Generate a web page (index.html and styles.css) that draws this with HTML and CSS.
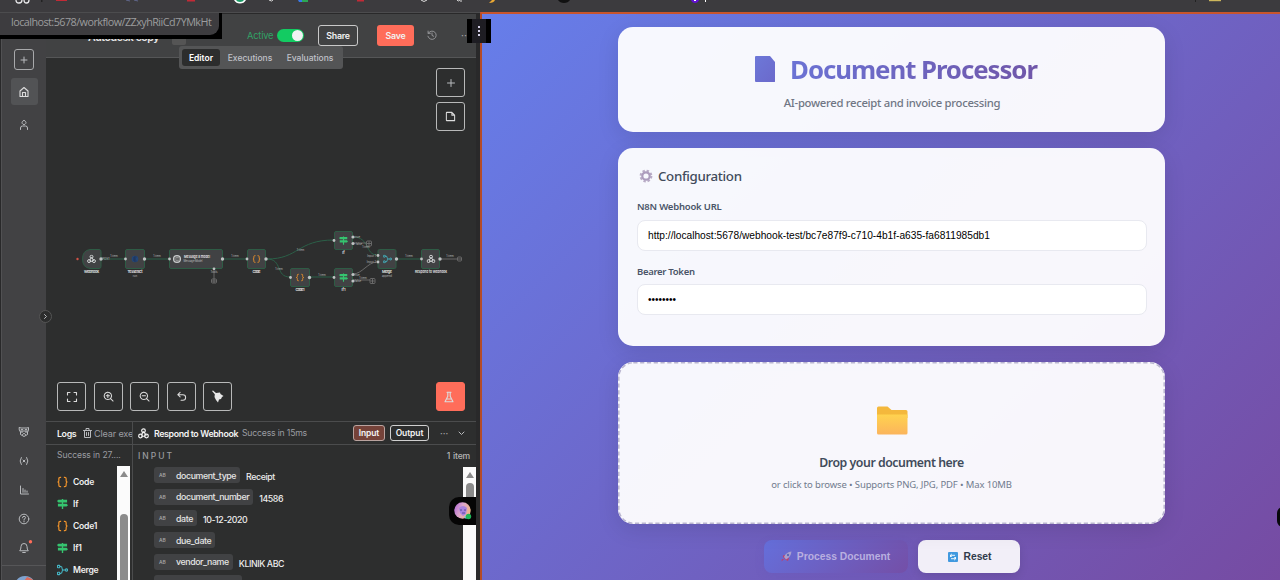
FILE: index.html
```html
<!DOCTYPE html>
<html lang="en">
<head>
<meta charset="utf-8">
<title>Document Processor</title>
<link rel="stylesheet" href="styles.css">
</head>
<body>
<svg class="defs" width="0" height="0">
  <defs>
    <symbol id="hook" viewBox="0 0 24 24"><g fill="none" stroke="currentColor" stroke-width="2.6"><circle cx="12" cy="6" r="4"/><circle cx="5.500" cy="17.500" r="4"/><circle cx="18.500" cy="17.500" r="4"/><path d="M12 7 7 16M13 8l5 9M7 18h9"/></g></symbol>
    <symbol id="sign" viewBox="0 0 24 24"><path fill="#35c46f" d="M10.500 1h3v1.500H22v6h-8.500v3H21l3 3-3 3h-7.500V23h-3v-5.500H2v-6h8.500v-3H3l-3-3 3-3h7.500z"/></symbol>
    <symbol id="braces" viewBox="0 0 24 24"><path fill="none" stroke="#f0932b" stroke-width="2.600" d="M9 2H7Q4 2 4 5v4q0 3-3 3 3 0 3 3v4q0 3 3 3h2M15 2h2q3 0 3 3v4q0 3 3 3-3 0-3 3v4q0 3-3 3h-2"/></symbol>
    <symbol id="merge" viewBox="0 0 24 24"><g fill="none" stroke="#45b5c4" stroke-width="2.400"><rect x="1" y="2" width="5" height="5" rx="1"/><rect x="1" y="17" width="5" height="5" rx="1"/><circle cx="20.500" cy="12" r="2.500"/><path d="M6 4.500h2q3 0 3 3.500t3 4h4M6 19.500h2q3 0 3-3.500t3-4"/></g></symbol>
  </defs>
</svg>

<div class="bookmarks">
  <svg width="1280" height="12" viewBox="0 0 1280 12">
    <g fill="none" stroke="#e8e8ea" stroke-width="1.300"><path d="M16 0q0 3 3 3t3-3M24 0q0 3 2.500 3t2.500-3"/></g>
    <path fill="#222" d="M41 0h1.500v2H41zM1195 0h1v2h-1z"/><path fill="#c22a36" d="M56 0h11v1H56zM187 0h8v1.500h-8zM357 0h7v1.500h-7z"/>
    <path stroke="#61678d" d="M126 0l4 1M134 0l4 1" fill="none"/>
    <path fill="#fff" d="M234 0h12q-2 3.500-6 3.500T234 0z"/><path fill="#1b9a65" d="M236 0h8q-1 2-4 2t-4-2z"/>
    <path stroke="#ddd" fill="none" d="M269 0q3 2 4 0M421 0q3 3 6 0M457 0q1 2 3 0M461 0v2"/>
    <path fill="#3978e8" d="M298 0h5v2h-4z"/><path fill="#2ca655" d="M302 0h6v2h-6z"/>
    <path fill="#eba833" d="M489 3q5 0 6-3h-3z"/><path fill="#cdb75c" d="M1209 0h12v1.200h-12z"/><path fill="#111" d="M558 0h12q-2 3-6 3t-6-3z"/>
    <path fill="#6210d2" d="M691 0h8q-1 3-4 3t-4-3z"/><path fill="#fff" d="M694 0h2v1h-2zM705 0h1v2h-1z"/>
  </svg>
</div>

<div class="split">
  <div class="left">
    <nav class="side">
      <div class="side-top">
        <span class="add"><svg width="10" height="10" viewBox="0 0 10 10"><path class="ln" d="M5 2v6M2 5h6"/></svg></span>
        <span class="home"><svg width="12" height="12" viewBox="0 0 12 12"><path class="ln b" d="M2 5 6 1.500 10 5v5.500H2zM4.500 10.500v-4h3v4"/></svg></span>
        <svg class="user" width="12" height="12" viewBox="0 0 12 12"><path class="ln" d="M2.500 10.500V9q0-2 2-2h3q2 0 2 2v1.500M6 1.500a2 2 0 1 0 .01 0z"/></svg>
      </div>
      <div class="side-low">
        <svg width="12" height="12" viewBox="0 0 12 12"><path class="ln" d="M1.500 1.500 3 2h6l1.500-.5v3L9.500 6v2.500L6 10.500 2.500 8.500V6l-1-1.500zM3 4v2h2V4zM7 4v2h2V4zM4.500 8.500 6 7.300l1.500 1.200"/></svg>
        <svg width="12" height="12" viewBox="0 0 12 12"><path class="ln" d="M3.300 2.500q-2.500 3.500 0 7M8.700 2.500q2.500 3.500 0 7M5 5l2 2M7 5 5 7"/></svg>
        <svg width="12" height="12" viewBox="0 0 12 12"><path class="ln" d="M2.500 2v8h8M5 4.500v3.800M7 6v2.300M9 7v1.300"/></svg>
        <svg width="12" height="12" viewBox="0 0 12 12"><circle class="ln" cx="6" cy="6" r="4.800"/><path class="ln" d="M4.500 4.800q0-1.500 1.500-1.500t1.500 1.300Q7.500 5.700 6 6.300v.5M6 8v.9"/></svg>
        <svg class="bell" width="18" height="14" viewBox="-3 -2 18 14"><path class="ln" d="M2 8.500q1-1 1-4 0-3 3-3t3 3q0 3 1 4zM4.700 10.500h2.600"/><circle cx="12.500" cy="-.2" r="1.700" fill="#ff6d5a"/></svg>
      </div>
      <div class="me"><svg width="18" height="5" viewBox="0 0 18 5"><path fill="#7fa3cf" d="M0 5Q3 0 9 0t9 5z"/><path fill="#d96b5c" d="M8 5l3-4q5 1 7 4z"/></svg></div>
    </nav>

    <div class="app">
      <header class="head">
        <span class="wfname">Autodesk copy</span><span class="tagbox">+1</span>
        <div class="acts"><span class="active">Active</span><span class="toggle"><i></i></span><span class="share">Share</span><span class="save">Save</span>
        <svg class="hist" width="10" height="10" viewBox="0 0 12 12"><path class="ln" d="M1.300 1.300V4H4M1.500 4a5 5 0 1 1-.4 3.500M6 3.500V6.500l2 1"/></svg><span class="dots">···</span></div>
      </header>
      <div class="tabs"><span class="tab on">Editor</span><span class="tab">Executions</span><span class="tab">Evaluations</span></div>

      <section class="canvas">
        <svg class="flow" width="430" height="363" viewBox="46 58 430 363">
          <g fill="none" stroke="#2b6048" stroke-width="1">
            <path d="M101 259h24M145 259h24M223 259h24M267 259c32 0 30-19 67-19M267 259c16 0 8 18 23 18M310 277h24M397 259h24M353 237c17 0 12 18 24 18"/>
          </g>
          <g fill="none" stroke="#777" stroke-width=".8"><path d="M353 243h13M353 280h17M353 274c9 0 15-12 24-12M440 259h17M214 269v10"/><rect x="366.500" y="241" width="5" height="5" rx="1"/><rect x="370" y="278.500" width="5" height="5" rx="1"/><rect x="457.500" y="257" width="4" height="4" rx="1"/><rect x="211.500" y="279" width="5" height="4" rx="1"/><path d="M367 243.500h4M369 241.500v4M370.500 281h4M372.500 279v4M458 259h3M212 281h4M214 279v4"/></g>
          <g fill="#414244" stroke="#2e5c45" stroke-width="1">
            <path d="M90 249.500h9q2 0 2 2v15q0 2-2 2h-9q-7.500-1-7.500-9.500T90 249.500z"/>
            <rect x="125.500" y="249.500" width="19" height="19" rx="1.500"/><rect x="169.500" y="249.500" width="53" height="19" rx="1.500"/><rect x="247.500" y="249.500" width="18" height="19" rx="1.500"/><rect x="334.500" y="231.500" width="18" height="18" rx="1.500"/><rect x="290.500" y="268.500" width="19" height="18" rx="1.500"/><rect x="334.500" y="268.500" width="18" height="18" rx="1.500"/><rect x="378" y="249.500" width="18" height="19" rx="1.500"/><rect x="421.500" y="249.500" width="18" height="19" rx="1.500"/>
          </g>
          <g fill="#bfc2c3"><circle cx="101" cy="259" r="1.700"/><circle cx="125.500" cy="259" r="1.400"/><circle cx="144.500" cy="259" r="1.700"/><circle cx="169.500" cy="259" r="1.400"/><circle cx="222.500" cy="259" r="1.700"/><circle cx="247" cy="259" r="1.400"/><circle cx="266" cy="259" r="1.700"/><circle cx="334" cy="240.500" r="1.400"/><circle cx="353" cy="237" r="1.600"/><circle cx="353" cy="243.500" r="1.600"/><circle cx="290.500" cy="277.500" r="1.400"/><circle cx="309.500" cy="277.500" r="1.700"/><circle cx="334" cy="277.500" r="1.400"/><circle cx="353" cy="274.500" r="1.600"/><circle cx="353" cy="281" r="1.600"/><circle cx="378" cy="255.500" r="1.400"/><circle cx="378" cy="262" r="1.400"/><circle cx="396.500" cy="259" r="1.700"/><circle cx="421.500" cy="259" r="1.400"/><circle cx="440" cy="259" r="1.700"/><circle cx="214" cy="268.800" r="1.400"/></g>
          <circle cx="77.500" cy="259" r="1.200" fill="#d15246"/>
          <g color="#d5d7d8"><use href="#hook" x="87" y="254.500" width="9" height="9"/><use href="#hook" x="426.500" y="254.500" width="9" height="9"/></g>
          <circle cx="135" cy="259" r="3.300" fill="#234778"/><path d="M136.500 257h-2.500v4h2.500M134 259h2" stroke="#1e3259" fill="none"/>
          <circle cx="177" cy="259" r="3.400" fill="none" stroke="#c9cbcc" stroke-width="1.300"/><path d="M175 258l4-1v4l-4-1zM177 256v6" fill="none" stroke="#aaa" stroke-width=".7"/>
          <use href="#braces" x="252.500" y="255" width="8" height="8"/><use href="#braces" x="296" y="273.500" width="8" height="8"/>
          <use href="#sign" x="339" y="236" width="9" height="9"/><use href="#sign" x="339" y="273" width="9" height="9"/><use href="#merge" x="383" y="254.500" width="9" height="9"/>
          <g class="nlab"><text x="91.500" y="273.300" textLength="15">Webhook</text><text x="135" y="273.300" textLength="15">Tesseract</text><text x="256.500" y="273.300" textLength="8">Code</text><text x="343.500" y="254">If</text><text x="300" y="291" textLength="9">Code1</text><text x="343.500" y="291">If1</text><text x="387" y="273.300" textLength="10">Merge</text><text x="431" y="273.300" textLength="32" lengthAdjust="spacingAndGlyphs">Respond to Webhook</text><text x="197" y="258" textLength="26" lengthAdjust="spacingAndGlyphs">Message a model</text></g>
          <g class="mini"><text x="193" y="262" textLength="19">Message Model</text><text x="135" y="277">run</text><text x="387" y="277">append</text><text x="106" y="260">POST</text><text x="114" y="257">1 item</text><text x="157" y="257">1 item</text><text x="235" y="257">1 item</text><text x="300.500" y="250.500">1 item</text><text x="279" y="269.500">1 item</text><text x="322" y="276">1 item</text><text x="409" y="257">1 item</text><text x="450" y="257">1 item</text><text x="357.500" y="238">true</text><text x="359" y="244.500">false</text><text x="366" y="248">1 item</text><text x="357" y="275.500">true</text><text x="358" y="282">false</text><text x="363" y="279">1 item</text><text x="371.500" y="256.500">Input 1</text><text x="371.500" y="263">Input 2</text><text x="214" y="273">Tools</text></g>
        </svg>
        <div class="tools-r">
          <span class="tool"><svg width="10" height="10" viewBox="0 0 10 10"><path class="ln" d="M5 1.500v7M1.500 5h7"/></svg></span>
          <span class="tool"><svg width="11" height="11" viewBox="0 0 12 12"><path class="ln b" d="M2 1.500h5.500l3 3v6H2q-.5 0-.5-.5V2q0-.5.500-.5zM7.500 1.500v3h3"/></svg></span>
        </div>
        <div class="tools-b">
          <span class="tool"><svg width="12" height="12" viewBox="0 0 12 12"><path class="ln b" d="M1.500 4V1.500H4M8 1.500h2.500V4M10.500 8v2.500H8M4 10.500H1.500V8"/></svg></span>
          <span class="tool"><svg width="11" height="11" viewBox="0 0 12 12"><path class="ln b" d="M5.300 1.300a4 4 0 1 0 .01 0M8.300 8.300 11 11M3.500 5.300h3.600M5.300 3.500v3.600"/></svg></span>
          <span class="tool"><svg width="11" height="11" viewBox="0 0 12 12"><path class="ln b" d="M5.300 1.300a4 4 0 1 0 .01 0M8.300 8.300 11 11M3.500 5.300h3.600"/></svg></span>
          <span class="tool"><svg width="11" height="11" viewBox="0 0 12 12"><path class="ln b" d="M4.500 1.500 2 4l2.500 2.500M2 4h5.500q3 0 3 3t-3 3H5.500"/></svg></span>
          <span class="tool"><svg width="13" height="13" viewBox="0 0 13 13"><path fill="#e8e8e8" d="M1 1l1-.5 3 2.500 4-.5.500 1.500 3 2-1.500 1-1 2-2 .5L7 12.500 5 10 3.500 7 3.800 4.300z"/></svg></span>
          <span class="tool test"><svg width="12" height="12" viewBox="0 0 12 12"><path class="ln b" d="M4 1.200h4M4.800 1.200v4L2 10.800h8L7.200 5.200v-4M3.500 8h5"/></svg></span>
        </div>
      </section>

      <section class="logs">
        <div class="log-l">
          <div class="bar"><b>Logs</b><svg width="9" height="10" viewBox="0 0 9 10"><path class="ln" d="M.5 2.500h8M3 2.500v-2h3v2M1.500 2.500v7h6v-7M3.500 4.500v3M5.500 4.500v3"/></svg><span class="mut clr">Clear execution</span></div>
          <div class="mut succ">Success in 27....</div>
          <ul class="runs">
            <li><svg width="11" height="12"><use href="#braces" width="11" height="12"/></svg>Code</li>
            <li><svg width="11" height="12"><use href="#sign" width="11" height="12"/></svg>If</li>
            <li><svg width="11" height="12"><use href="#braces" width="11" height="12"/></svg>Code1</li>
            <li><svg width="11" height="12"><use href="#sign" width="11" height="12"/></svg>If1</li>
            <li><svg width="11" height="12"><use href="#merge" width="11" height="12"/></svg>Merge</li>
          </ul>
          <div class="scroll s1"><i></i><b></b></div>
        </div>
        <div class="log-r">
          <div class="bar"><svg class="hk" width="11" height="11"><use href="#hook" width="11" height="11"/></svg><b class="rtw">Respond to Webhook</b><span class="mut s15">Success in 15ms</span>
            <span class="chip in">Input</span><span class="chip">Output</span><span class="dots2">···</span><svg class="chev" width="7" height="5" viewBox="0 0 7 5"><path class="ln" d="M1 1l2.500 2.500L6 1"/></svg></div>
          <div class="inrow"><span>INPUT</span><span class="items">1 item</span></div>
          <dl class="fields">
            <div><dt><i>AB</i>document_type</dt><dd>Receipt</dd></div>
            <div><dt><i>AB</i>document_number</dt><dd>14586</dd></div>
            <div><dt><i>AB</i>date</dt><dd>10-12-2020</dd></div>
            <div><dt><i>AB</i>due_date</dt><dd></dd></div>
            <div><dt><i>AB</i>vendor_name</dt><dd>KLINIK ABC</dd></div>
            <div><dt class="next"></dt></div>
          </dl>
          <div class="scroll s2"><i></i><b></b></div>
        </div>
      </section>
    </div>
    <div class="fold"><svg width="5" height="7" viewBox="0 0 5 7"><path class="ln" d="M1.500 1.500 3.500 3.500l-2 2"/></svg></div>
    <div class="avatar"><svg width="18" height="18" viewBox="0 0 18 18"><defs><linearGradient id="av" x2="1" y2=".4"><stop stop-color="#ad62d8"/><stop offset=".5" stop-color="#dba6cb"/><stop offset="1" stop-color="#efb58d"/></linearGradient></defs><circle cx="8.500" cy="8.500" r="8.200" fill="url(#av)"/><path fill="#a983e0" d="M5 6q4-4 8 0l-1 6-3 2-3-3z"/><path d="M6 8h2M10 8h2M8 11h3" stroke="#5b4a9a"/><path fill="#72c5dc" d="M10 15l4-3 1 2-3 3z"/><circle cx="14.500" cy="14.500" r="2.700" fill="#20b759"/></svg></div>
    <div class="status"><span>localhost:5678/workflow/ZZxyhRiiCd7YMkHt</span></div>
  </div>

  <main class="right">
    <section class="card hero">
      <h1><svg width="22" height="26" viewBox="0 0 22 26"><defs><linearGradient id="dg" x1="0" y1="0" x2="1" y2="1"><stop stop-color="#6d78d8"/><stop offset="1" stop-color="#6b69cb"/></linearGradient></defs><path fill="url(#dg)" d="M1 0h14l5 6v19.500q0 .5-1 .5H1q-1 0-1-1V1q0-1 1-1z"/></svg><span>Document Processor</span></h1>
      <p>AI-powered receipt and invoice processing</p>
    </section>
    <section class="card config">
      <h2><svg width="14" height="14" viewBox="0 0 14 14"><circle cx="7" cy="7" r="5.400" fill="none" stroke="#b9acc6" stroke-width="2" stroke-dasharray="2.400 1.840"/><circle cx="7" cy="7" r="3.700" fill="none" stroke="#ac9cbd" stroke-width="2.200"/></svg><span>Configuration</span></h2>
      <label>N8N Webhook URL</label>
      <div class="field"><span>http://localhost:5678/webhook-test/bc7e87f9-c710-4b1f-a635-fa6811985db1</span></div>
      <label class="l2">Bearer Token</label>
      <div class="field pw"><span>••••••••</span></div>
    </section>
    <section class="card drop">
      <svg class="dash" width="547" height="162"><rect x=".8" y=".8" width="545.400" height="160.400" rx="14.500" fill="none" stroke="#b9b5cf" stroke-width="1.500" stroke-dasharray="4.200 2.600"/></svg>
      <svg width="32" height="30" viewBox="0 0 32 30"><defs><linearGradient id="fg" x2="0" y2="1"><stop stop-color="#ffd34f"/><stop offset="1" stop-color="#fbb45c"/></linearGradient></defs><path fill="#f4b83c" d="M1 2q0-1.500 1.500-1.500h9L15.500 4H30q1.500 0 1.500 1.500V12H1z"/><path fill="url(#fg)" d="M1 8.500h30.500V27q0 1.500-1.500 1.500H2.500Q1 28.500 1 27z"/></svg>
      <h3>Drop your document here</h3>
      <p>or click to browse • Supports PNG, JPG, PDF • Max 10MB</p>
    </section>
    <div class="btns">
      <span class="btn proc"><svg width="11" height="11" viewBox="0 0 11 11"><path fill="#c13d69" d="M2 4.500 5 4l3 3-1 3-2-1-3-3zM1 8l2 0-2.500 2.500z"/><path fill="#a8a0cf" d="M3 6Q5 1 10.500.5 10 6 5 8.500z"/><circle cx="7" cy="4" r="1.200" fill="#5b68b8"/></svg><span>Process Document</span></span>
      <span class="btn reset"><svg width="10" height="10" viewBox="0 0 10 10"><rect width="10" height="10" rx="1" fill="#4199df"/><path d="M2.500 5V3.300h4.500M7.500 5v1.700H3M3.800 2 2.300 3.400l1.500 1.400M6.200 5.300l1.500 1.400-1.500 1.400" fill="none" stroke="#fff" stroke-width=".9"/></svg><span>Reset</span></span>
    </div>
    <div class="edge"></div>
  </main>
  <div class="handle"><i></i><i></i><i></i></div>
</div>
</body>
</html>
```
FILE: styles.css
```css
* { box-sizing: border-box; }
body { margin: 0; width: 1280px; height: 580px; overflow: hidden; display: flex; flex-direction: column; background: #2d2e2e; font-family: Inter, "Liberation Sans", sans-serif; }
svg { display: block; flex: none; }
.defs { position: absolute; }
i { font-style: normal; }
.ln { fill: none; stroke: #b9bbbe; stroke-width: 1; stroke-linecap: round; stroke-linejoin: round; }
.ln.b { stroke: #dcdcdc; stroke-width: 1.1; }
.bookmarks { height: 12px; background: #3c3b3e; flex: none; }
.split { position: relative; display: flex; height: 568px; }

.left { position: relative; width: 480px; display: flex; background: #29292a; padding: 1px 4px 0 1px; border-top: 1px solid #4c4c4e; height: 568px; }
.side { width: 45px; background: #424244; border-left: 1px solid #515153; display: flex; flex-direction: column; align-items: center; justify-content: space-between; padding-top: 36px; height: 566px; }
.side-top { display: flex; flex-direction: column; align-items: center; }
.add { width: 20px; height: 21px; border: 1px solid #a8a9ab; border-radius: 3px; display: flex; align-items: center; justify-content: center; }
.home { width: 27px; height: 27px; margin: 8px 0 14px; background: #525355; border-radius: 3px; display: flex; align-items: center; justify-content: center; }
.side-top { margin-top: -1px; }
.side-low { display: flex; flex-direction: column; align-items: center; gap: 17px; margin-top: auto; }
.bell { margin-top: -2px; }
.me { margin-top: 11px; width: 44px; border-top: 1px solid #565658; height: 15px; padding: 10px 0 0 14px; overflow: hidden; }

.app { width: 430px; height: 566px; display: flex; flex-direction: column; position: relative; background: #2d2e2e; }
.head { height: 44px; background: #414243; border-bottom: 1px solid #555657; display: flex; padding-left: 42px; flex: none; }
.wfname { color: #e5e5e5; font-weight: 600; font-size: 10.600px; letter-spacing: -.45px; line-height: 14px; width: 84px; margin-top: 17px; white-space: nowrap; }
.tagbox { width: 14px; height: 14px; margin-top: 17px; background: #555; border-radius: 2px; color: #bbb; font-size: 7px; line-height: 12px; text-align: center; }
.acts { display: flex; align-items: center; height: 22px; margin: 10px 0 0 61px; }
.active { color: #32a166; font-size: 9.300px; letter-spacing: -.2px; width: 30px; }
.toggle { width: 27px; height: 13px; border-radius: 7px; background: #13cb62; padding: 1px; display: flex; justify-content: flex-end; }
.toggle i { width: 11px; height: 11px; border-radius: 50%; background: #f1f2f4; }
.share, .save { height: 21px; border-radius: 3px; font-weight: 600; font-size: 8.800px; letter-spacing: -.25px; display: flex; align-items: center; justify-content: center; color: #f2f2f2; }
.share { width: 40px; border: 1px solid #c9c9c9; margin-left: 14px; }
.save { width: 37px; background: #ff6d5a; margin-left: 19px; }
.hist { margin-left: 13px; opacity: .8; }
.dots { color: #aaa; font-size: 10px; margin-left: 24px; }
.tabs { position: absolute; left: 133px; top: 32px; width: 164px; height: 23px; background: #545556; border-radius: 3px; display: flex; padding: 3px; font-size: 8.500px; font-weight: 500; color: #c0c2c9; }
.tab { display: flex; align-items: center; justify-content: center; width: 60px; }
.tab.on { width: 38px; background: #2c2d2d; color: #fff; border-radius: 3px; font-weight: 600; }
.canvas { position: relative; height: 363px; flex: none; }
.tool { width: 29px; height: 29px; border: 1px solid #b8b9b9; border-radius: 3px; display: flex; align-items: center; justify-content: center; }
.tools-r { position: absolute; left: 390px; top: 10px; display: flex; flex-direction: column; gap: 5px; }
.tools-b { position: absolute; left: 11px; top: 324px; display: flex; gap: 7.600px; width: 408px; }
.test { margin-left: auto; background: #ff6d5a; border-color: #ff6d5a; padding-right: 4px; }
.nlab { font: 600 3.700px Inter, sans-serif; fill: #e9e9e9; text-anchor: middle; }
.mini { font: 500 2.800px Inter, sans-serif; fill: #a3a5a6; text-anchor: middle; }

.logs { flex: 1; display: flex; border-top: 1px solid #4b4c4d; min-height: 0; }
.log-l { position: relative; width: 87px; border-right: 1px solid #4b4c4d; overflow: hidden; color: #f0f0f0; }
.bar { height: 23px; border-bottom: 1px solid #4b4c4d; display: flex; align-items: center; font-size: 9.500px; color: #f3f3f3; white-space: nowrap; overflow: hidden; }
.bar b { font-weight: 600; flex: none; letter-spacing: -.35px; }
.log-l .bar { padding-left: 11px; }
.log-l .bar b { width: 26px; font-size: 8.800px; }
.mut { color: #9b9da2; font-size: 9.100px; letter-spacing: -.15px; }
.clr { margin-left: 2px; }
.succ { padding: 4px 0 0 11px; line-height: 12px; letter-spacing: -.1px; white-space: nowrap; font-size: 8.600px; }
.runs { list-style: none; margin: 10px 0 0; padding: 0 0 0 11px; font-size: 8.600px; font-weight: 600; letter-spacing: -.25px; }
.runs li { display: flex; align-items: center; gap: 5px; height: 21.900px; }
.scroll { position: absolute; width: 13px; background: #fbfbfb; bottom: 0; display: flex; flex-direction: column; align-items: center; }
.scroll i { border: 4px solid transparent; border-top: 0; border-bottom: 6px solid #8b8b8b; margin-top: 5px; }
.scroll b { width: 8px; background: #8b8b8b; border-radius: 4px 4px 0 0; }
.s1 { left: 71px; top: 44px; }
.s1 b { margin-top: 37px; flex: 1; }
.log-r { position: relative; width: 343px; overflow: hidden; }
.hk { margin-left: 5px; }
.rtw { margin-left: 5px; font-size: 8.800px; width: 88px; }
.bar .rtw { letter-spacing: -.36px; }
.s15 { width: 111px; flex: none; font-size: 8.700px; letter-spacing: -.2px; }
.chip { height: 16px; width: 39px; flex: none; border: 1px solid #cfcfcf; border-radius: 3px; font-size: 8.500px; letter-spacing: -.1px; font-weight: 600; line-height: 14px; text-align: center; margin-right: 11px; }
.chip.in { width: 32px; background: #754239; border-color: #b9a39f; margin-right: 5px; }
.dots2 { width: 18px; flex: none; color: #aaa; }
.inrow { display: flex; justify-content: space-between; padding: 4px 6px 0 5px; font-size: 8.500px; color: #999b9f; letter-spacing: 2px; line-height: 14px; font-weight: 500; }
.items { letter-spacing: -.2px; word-spacing: 1px; font-size: 8.600px; color: #b5b6b8; }
.fields { margin: 4px 0 0 21px; font-size: 8.800px; letter-spacing: -.4px; color: #ededed; font-weight: 500; }
.fields div { display: flex; gap: 6px; height: 21.700px; }
.fields dt { height: 16px; background: #414244; border-radius: 3px; display: flex; align-items: center; padding: 0 4px 0 5px; color: #e5e5e5; }
.fields dt i { font-size: 5px; letter-spacing: 0; color: #aaa; width: 17px; }
.fields dt.next { width: 88px; }
.fields dd { margin: 1px 0 0; line-height: 17px; }
.s2 { left: 330px; top: 45px; }
.s2 b { margin-top: 5px; height: 40px; }
.fold { position: absolute; left: 39px; top: 297px; width: 13px; height: 13px; border: 1px solid #555; border-radius: 50%; background: #2c2d2d; display: flex; align-items: center; justify-content: center; }
.avatar { position: absolute; left: 449px; top: 484px; width: 27px; height: 28px; background: #050505; border-radius: 10px 0 0 10px; padding: 5px; }
.status { position: absolute; left: 0; top: 0; width: 222px; height: 26px; background: #000; }
.status span { display: block; width: 219px; height: 22px; background: #3d3c3f; border-radius: 0 0 9px 0; padding-left: 11px; font: 10.800px/18px "Open Sans", sans-serif; letter-spacing: -.54px; color: #9c9c9e; white-space: nowrap; }

.right { position: relative; width: 800px; height: 568px; border-left: 2px solid #b54b27; border-top: 2px solid #c8552c; background: linear-gradient(135deg, #667eea 0%, #764ba2 100%); display: flex; flex-direction: column; align-items: center; padding: 13px 0 0 21px; font-family: "Noto Sans", sans-serif; overflow: hidden; }
.card { width: 547px; border-radius: 15px; background: rgba(255,255,255,.95); box-shadow: 0 6px 22px rgba(0,0,0,.1); margin-bottom: 16px; flex: none; }
h1, h2, h3, p { margin: 0; }
.hero { height: 105px; display: flex; flex-direction: column; align-items: center; padding-top: 21px; margin-bottom: 16px; }
h1 { display: flex; align-items: center; gap: 13px; height: 41px; font-size: 25.800px; letter-spacing: -1.05px; line-height: 40px; white-space: nowrap; padding-left: 11px; }
h1 span { background: linear-gradient(100deg, #6b73d5, #7056a8); -webkit-background-clip: text; background-clip: text; color: transparent; padding-right: 2px; }
.hero p { color: #707684; font-size: 11.300px; letter-spacing: -.3px; line-height: 18px; margin-top: 5px; font-weight: 500; padding-left: 1px; }
.config { height: 198px; padding: 16px 18px 0 19px; margin-bottom: 16px; }
h2 { display: flex; align-items: center; gap: 5px; padding-left: 2px; font-size: 13.300px; letter-spacing: -.33px; font-weight: 500; color: #414b5b; height: 24px; }
label { display: block; font-size: 9.500px; letter-spacing: -.2px; line-height: 14px; font-weight: 600; color: #4a5568; margin: 12px 0 6px; }
.l2 { margin: 14px 0 5px; letter-spacing: -.3px; }
.field { height: 31px; background: #fff; border: 1px solid #e8e9f0; border-radius: 8px; padding-left: 10px; font: 10.200px/30px "Liberation Sans", Arial, sans-serif; color: #000; }
.field.pw { font-size: 10px; }
.drop { position: relative; height: 162px; display: flex; flex-direction: column; align-items: center; padding-top: 44px; }
.dash { position: absolute; left: 0; top: 0; }
h3 { margin-top: 17px; font-size: 12.300px; letter-spacing: -.46px; line-height: 20px; font-weight: 600; color: #414b5b; }
.drop p { margin-top: 4px; color: #717b8e; font-size: 9.500px; letter-spacing: -.13px; line-height: 16px; }
.btns { display: flex; gap: 10px; }
.btn { height: 33px; border-radius: 8px; display: flex; align-items: center; justify-content: center; gap: 5px; font: bold 10.300px "Liberation Sans", Arial, sans-serif; }
.proc { width: 144px; background: linear-gradient(135deg, #656fdb, #744fa7); color: #b9afe0; box-shadow: 0 3px 10px rgba(90,80,190,.15); }
.reset { width: 102px; padding-left: 3px; background: #f2eff8; color: #303a4b; box-shadow: 0 3px 10px rgba(0,0,0,.1); }
.edge { position: absolute; right: -9px; top: 493px; width: 12px; height: 20px; border-radius: 7px; background: #08080b; }
.handle { position: absolute; left: 467px; top: 7px; width: 24px; height: 24px; background: linear-gradient(90deg, #000 5px, #1e1d23 5px 19px, #000 19px); display: flex; flex-direction: column; align-items: center; justify-content: center; gap: 2px; }
.handle i { width: 2px; height: 2px; background: #d4d0e8; }
```
